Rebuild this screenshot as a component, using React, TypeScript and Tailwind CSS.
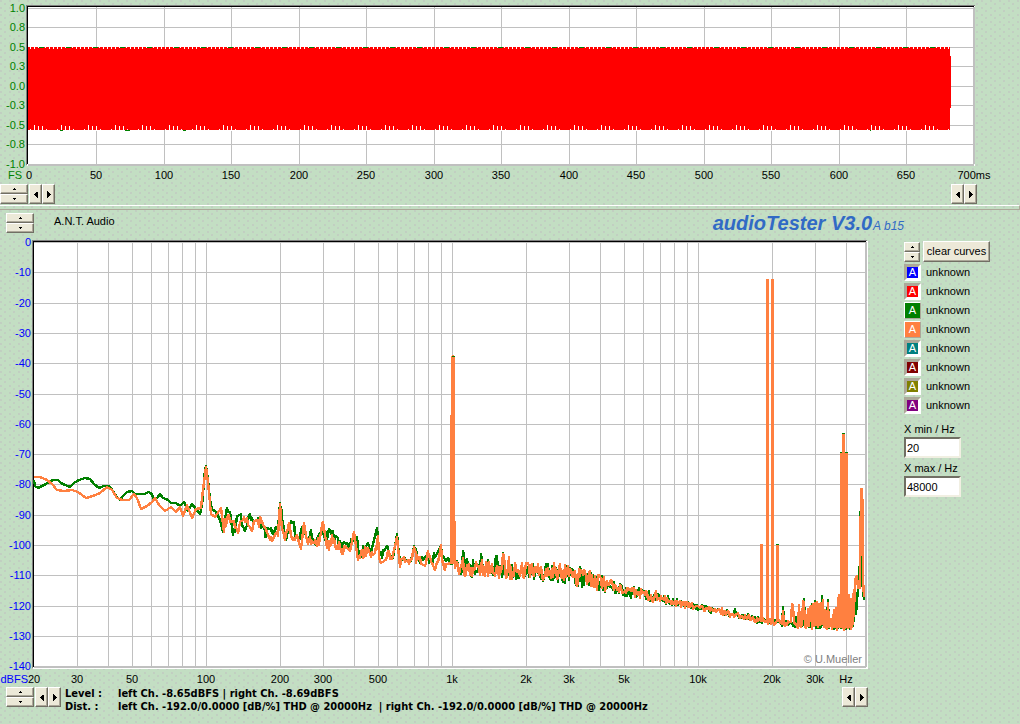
import React, { useState } from 'react';
import { clsx } from 'clsx';

type Point = [number, number];

const uiFont = "font-['Liberation_Sans',Arial,sans-serif]";

// ---------- small controls ----------

const raised =
  'flex items-center justify-center border border-t-white border-l-white border-r-[#716f64] border-b-[#716f64] bg-[#ece9d8] shadow-[inset_-1px_-1px_0_#aca899] active:bg-[#dedbca]';

const arrows = {
  up: 'M0 3h5v-1h-1v-1h-1v-1h-1v1h-1v1h-1z',
  down: 'M0 0h5v1h-1v1h-1v1h-1v-1h-1v-1h-1z',
  left: 'M3 0v7h-1v-1h-1v-1h-1v-1h-1v-1h1v-1h1v-1h1z',
  right: 'M0 0v7h1v-1h1v-1h1v-1h1v-1h-1v-1h-1v-1h-1z',
};

const Arrow = ({ dir }: { dir: keyof typeof arrows }) => {
  if (dir === 'up' || dir === 'down') {
    // small triangle, three pixels at its base
    return (
      <svg width="3" height="2" viewBox="0 0 3 2" shapeRendering="crispEdges">
        <path d={dir === 'up' ? 'M1 0h1v1h1v1H0V1h1z' : 'M0 0h3v1H2v1H1V1H0z'} />
      </svg>
    );
  }
  return (
    <svg width="4" height="7" viewBox={dir === 'left' ? '-1 0 4 7' : '0 0 4 7'} shapeRendering="crispEdges">
      <path d={arrows[dir]} />
    </svg>
  );
};

const Spinner = ({ label, narrow }: { label: string; narrow?: boolean }) => (
  <div className={clsx('flex shrink-0 flex-col', narrow ? 'w-4' : 'w-7')}>
    <button type="button" aria-label={`${label} up`} className={clsx(raised, 'h-[10px]')}>
      <Arrow dir="up" />
    </button>
    <button type="button" aria-label={`${label} down`} className={clsx(raised, 'h-[10px]')}>
      <Arrow dir="down" />
    </button>
  </div>
);

const Scroller = ({ label }: { label: string }) => (
  <div className="flex shrink-0">
    <button type="button" aria-label={`${label} left`} className={clsx(raised, 'h-5 w-[13px]')}>
      <Arrow dir="left" />
    </button>
    <button type="button" aria-label={`${label} right`} className={clsx(raised, 'h-5 w-[13px]')}>
      <Arrow dir="right" />
    </button>
  </div>
);

// ---------- time domain ----------

const levels = ['1.0', '0.8', '0.5', '0.3', '0.0', '-0.3', '-0.5', '-0.8', '-1.0'];
const times = Array.from({ length: 15 }, (_, i) => i * 50);
const periods = Array.from({ length: 35 }, (_, i) => 28 + i * 27);

const timeX = (ms: number) => Math.round(28.5 + ms * 1.35);
const levelY = (i: number) => Math.round(7.5 + i * 19.5);

const Waveform = () => (
  <svg viewBox="0 0 1020 184" className="block h-auto w-full" role="img" aria-label="Waveform" fontSize="11">
    <g shapeRendering="crispEdges">
      <rect x="26" y="5" width="949" height="1" fill="#808080" />
      <rect x="26" y="5" width="1" height="160" fill="#808080" />
      <rect x="27" y="6" width="948" height="160" fill="#fff" />
      {times.slice(1).map((t) => (
        <rect key={t} x={timeX(t) - (t === 700 ? 1 : 0)} y="7" width={t === 700 ? 2 : 1} height="157" fill="#c0c0c0" />
      ))}
      {levels.map((l, i) => (
        <rect key={l} x="28" y={levelY(i)} width="946" height={i === 8 ? 2 : 1} fill="#c0c0c0" />
      ))}
      <rect x="27" y="6" width="947" height="1" />
      <rect x="27" y="6" width="1" height="158" />
      <rect x="28" y="47" width="922" height="83" fill="#f00" />
      <rect x="950" y="56" width="1" height="52" fill="#f00" />
      {periods.map((p) => (
        <g key={p}>
          {[2, 6, 21, 25].map((d) => p + d < 950 && <rect key={d} x={p + d} y="47" width="1" height="2" fill="#fff" />)}
          {[10, 17].map((d) => p + d < 950 && <rect key={d} x={p + d} y="47" width="1" height="1" fill="#fff" />)}
          {[6, 10, 14].map(
            (d) => p + d < 950 && <rect key={d} x={p + d} y={d === 6 ? 125 : 126} width="1" height="5" fill="#fff" />,
          )}
          {[2, 18].map((d) => p + d < 950 && <rect key={d} x={p + d} y="129" width="1" height="1" fill="#fff" />)}
          {p < 920 && <rect x={p + 11} y="47" width="5" height="1" fill="#008000" />}
        </g>
      ))}
      {/* left channel showing below the right one */}
      <path d="M60 130h3v1h-3zM125 130h5v1h-5zM183 130h3v1h-3zM870 130h1v1h-1z" fill="#008000" />
    </g>
    <g fill="#008000" textAnchor="end">
      {levels.map((l, i) => (
        <text key={l} x="25" y={levelY(i) + 4}>
          {l}
        </text>
      ))}
      <text x="22" y="179">
        FS
      </text>
    </g>
    <g textAnchor="middle">
      {times.map((t) => (
        <text key={t} x={timeX(t)} y="179">
          {t === 700 ? '700ms' : t}
        </text>
      ))}
    </g>
  </svg>
);

// ---------- spectrum ----------

const freqX = (f: number) => Math.round(206 + 246 * Math.log10(f / 100));
const dbY = (db: number) => Math.round(242 - db * 3.03);

const gridFreqs = [10, 100, 1000, 10000]
  .flatMap((d) => [1, 2, 3, 4, 5, 6, 7, 8, 9].map((n) => n * d))
  .filter((f) => f > 20 && f < 48000);

const freqLabels: [number, string][] = [
  [20, '20'],
  [30, '30'],
  [50, '50'],
  [100, '100'],
  [200, '200'],
  [300, '300'],
  [500, '500'],
  [1000, '1k'],
  [2000, '2k'],
  [3000, '3k'],
  [5000, '5k'],
  [10000, '10k'],
  [20000, '20k'],
  [30000, '30k'],
  [40000, 'Hz'],
];

const leftStart =
  '34,480 35,486 38,488 42,486 46,484 50,481 54,480 58,480 61,483 65,485 70,487 74,483 79,480 85,478 90,479 94,484 99,488 104,486 109,486 113,491 117,497 120,500 123,496 127,492 132,491 135,494 140,494 145,494 148,492 151,493 154,499 157,498 160,494 163,498 168,500 171,503 176,503 180,506 184,502 188,511 192,504 196,509 200,514 202,505 203,494 205,470 206,466 208,480 210,500 212,509 216,512 220,520 223,532 226,513 230,512 233,535 236,525 241,514 245,531 249,515 252,518 257,521 260,525 263,526 265,537 270,529 274,534 278,530 280,503 282,518 286,540 290,524 294,522 299,540 303,526 307,540 311,530 316,545 322,530 325,540 328,534 331,531 334,540 338,538 342,550 345,543 350,550 355,535 358,548 362,557 367,544 371,552 377,528 379,550 382,558 387,546 393,558 397,534 399,555 404,557 411,561 414,546 418,560 422,557 428,554 433,562 441,546 446,561 451,564';

const rightStart =
  '34,477 40,477 47,480 52,484 57,490 64,491 72,490 78,492 86,498 93,496 100,493 107,487 112,490 117,498 122,500 129,500 134,494 137,498 141,509 147,506 152,502 155,498 159,505 165,511 171,507 176,512 180,507 183,516 187,505 192,518 196,509 201,508 203,490 206,467 208,482 211,514 215,517 221,508 224,532 228,515 234,521 238,533 243,520 247,518 252,531 258,520 263,524 270,540 276,533 278,536 280,504 282,530 285,540 289,523 293,540 297,535 301,549 304,523 307,541 310,537 313,543 317,546 320,536 323,522 326,541 329,550 332,535 336,549 339,542 342,554 345,546 350,551 354,532 358,560 361,552 364,556 367,548 371,557 375,553 378,536 379,556 384,561 388,551 392,559 397,537 400,567 403,558 408,560 412,559 414,547 416,563 420,557 425,566 428,551 431,562 435,570 438,562 441,545 442,562 445,570 451,563 452,357 454,357 454,500 455,568';

const random = (seed: number) => {
  let s = seed;
  return () => {
    s = (s * 16807) % 2147483647;
    return s / 2147483647;
  };
};

// bins get denser towards high frequencies, so add some in between
const roughen = (points: string, seed: number) => {
  const rnd = random(seed);
  const list = points.split(' ').map((p) => p.split(',').map(Number));
  return list
    .flatMap(([x, y], i) => {
      const next = list[i + 1];
      if (!next || x < 222 || next[0] - x < 2 || Math.abs(next[1] - y) > 18) return [[x, y]];
      const mid = (y + next[1]) / 2;
      return [
        [x, y],
        [x + 1, Math.round(mid + (rnd() - 0.5) * 10)],
        [x + 2, Math.round(mid + (rnd() - 0.5) * 10)],
      ];
    })
    .join(' ');
};

// x, y, noise height
const floor: [number, number, number][] = [
  [456, 570, 10],
  [500, 572, 11],
  [560, 575, 13],
  [590, 582, 13],
  [620, 591, 8],
  [650, 597, 7],
  [680, 604, 5],
  [720, 612, 4],
  [760, 621, 4],
  [800, 626, 4],
  [856, 628, 4],
];

const floorAt = (x: number) => {
  const i = Math.max(
    1,
    floor.findIndex((f) => f[0] >= x),
  );
  const [x0, y0, n0] = floor[i - 1];
  const [x1, y1, n1] = floor[i];
  const k = (x - x0) / (x1 - x0);
  return { y: y0 + (y1 - y0) * k, n: n0 + (n1 - n0) * k };
};

const noiseFloor = (seed: number, peaks: Point[]) => {
  const rnd = random(seed);
  const out: string[] = [];
  for (let x = 457; x < 852; x += 1) {
    const { y, n } = floorAt(x);
    const peak = peaks.find((p) => p[0] === x);
    out.push(`${x},${peak ? peak[1] : Math.round(y + (rnd() - 0.6) * n * 1.5)}`);
  }
  return out.join(' ');
};

const leftPeaks: Point[] = [
  [463, 551], [464, 556], [467, 559], [473, 560], [481, 554], [482, 560], [488, 560], [496, 556], [497, 556],
  [503, 553], [522, 565], [546, 564], [547, 567], [559, 566], [566, 568], [580, 567], [581, 570], [593, 575],
  [688, 602], [702, 605], [735, 609], [748, 614], [783, 607], [796, 617], [804, 599], [812, 604], [815, 601],
  [822, 596], [828, 600],
];

const rightPeaks: Point[] = [
  [463, 558], [482, 560], [489, 562], [503, 554], [504, 556], [509, 557], [515, 563], [526, 563], [527, 564],
  [532, 564], [541, 567], [546, 569], [554, 563], [570, 569], [571, 570], [583, 575], [592, 575], [598, 575],
  [599, 575], [611, 580], [620, 585], [656, 591], [709, 607], [722, 608], [783, 611], [792, 604], [793, 606],
  [799, 605], [803, 601], [804, 602], [808, 609], [810, 608], [811, 606], [813, 604], [815, 603], [817, 602],
  [819, 604], [821, 603], [823, 600], [825, 610], [828, 603], [831, 619], [834, 610], [836, 608], [838, 598],
  [840, 600],
];

const leftEnd = '852,620 853,626 855,598 856,614 858,588 860,562 861,490 862,580 864,600';
const rightEnd = '852,626 854,612 855,580 857,576 858,588 860,588 861,489 862,489 863,522 863,580 864,597';

const leftCurve = `${roughen(leftStart, 19)} ${noiseFloor(71, leftPeaks)} ${leftEnd}`;
const rightCurve = `${roughen(rightStart, 523)} ${noiseFloor(4207, rightPeaks)} ${rightEnd}`;

// x, top, bottom, width
const tones: [number, number, number, number][] = [
  [452, 358, 564, 3],
  [760, 544, 622, 3],
  [766, 279, 622, 3],
  [771, 279, 622, 3],
  [776, 545, 622, 3],
  [840, 453, 628, 8],
  [842, 434, 628, 3],
];

const Spectrum = () => (
  <svg viewBox="0 236 868 450" className="block h-auto w-full" role="img" aria-label="Spectrum" fontSize="11">
    <g shapeRendering="crispEdges">
      <rect x="32" y="240" width="835" height="428" fill="#808080" />
      <rect x="33" y="241" width="835" height="428" fill="#fff" />
      {gridFreqs.map((f) => (
        <rect key={f} x={freqX(f)} y="242" width="1" height="425" fill="#c0c0c0" />
      ))}
      {Array.from({ length: 15 }, (_, i) => (
        <rect key={i} x="34" y={dbY(-10 * i)} width="832" height={i === 14 ? 2 : 1} fill="#c0c0c0" />
      ))}
      <rect x="865" y="242" width="2" height="425" fill="#c0c0c0" />
      <rect x="33" y="241" width="833" height="1" />
      <rect x="33" y="241" width="1" height="426" />
      <g fill="none" strokeWidth="2.4" strokeLinejoin="round">
        <polyline points={leftCurve} stroke="#008000" />
        <polyline points={rightCurve} stroke="#ff8040" />
      </g>
      {tones.map(([x, top, bottom, w]) => (
        <rect key={x} x={x} y={top} width={w} height={bottom - top} fill="#ff8040" />
      ))}
      <path d="M452 356h3v1h-3zM776 544h3v1h-3zM840 452h2v1h-2zM845 452h3v1h-3zM842 433h3v1h-3z" fill="#008000" />
      <path d="M838 628V594h2v34zM848 628V594h2v4h2v-5h2v32z" fill="#ff8040" />
    </g>
    <g fill="#00f" textAnchor="end">
      {Array.from({ length: 15 }, (_, i) => (
        <text key={i} x="31" y={dbY(-10 * i) + 4}>
          {-10 * i || 0}
        </text>
      ))}
      <text x="28" y="683">
        dBFS
      </text>
    </g>
    <g textAnchor="middle">
      {freqLabels.map(([f, label]) => (
        <text key={f} x={freqX(f)} y="683">
          {label}
        </text>
      ))}
    </g>
    <text x="862" y="663" textAnchor="end" fill="#808080">
      © U.Mueller
    </text>
  </svg>
);

// ---------- side panel ----------

const curves = [
  { color: 'bg-[#0000ff]', on: false },
  { color: 'bg-[#ff0000]', on: false },
  { color: 'bg-[#008000]', on: true },
  { color: 'bg-[#ff8040]', on: true },
  { color: 'bg-[#008080]', on: false },
  { color: 'bg-[#800000]', on: false },
  { color: 'bg-[#808000]', on: false },
  { color: 'bg-[#800080]', on: false },
];

const inputStyle =
  'mt-px h-[21px] w-[57px] border-2 border-t-[#716f64] border-l-[#716f64] border-r-[#f1efe2] border-b-[#f1efe2] bg-white px-px text-[11px] leading-4 outline-none';

const SidePanel = () => {
  const [min, setMin] = useState('20');
  const [max, setMax] = useState('48000');
  return (
    <aside className="w-[152px] shrink-0 pt-[5px] pl-9">
      <div className="flex items-center gap-[3px]">
        <Spinner label="Curve" narrow />
        <button type="button" className={clsx(raised, 'h-[21px] w-[67px] whitespace-nowrap')}>
          clear curves
        </button>
      </div>
      <ul className="mt-px">
        {curves.map((c) => (
          <li key={c.color} className="flex h-[19px] items-center gap-[5px]">
            <button
              type="button"
              aria-label="Toggle curve"
              aria-pressed={c.on}
              className={clsx(
                'flex h-[17px] w-[17px] items-center justify-center text-[11px] leading-none text-white',
                c.color,
                c.on
                  ? 'border border-t-white border-l-white border-r-[#aca899] border-b-[#aca899]'
                  : 'border-[3px] border-t-[#aca899] border-l-[#aca899] border-r-white border-b-white',
              )}
            >
              A
            </button>
            <span>unknown</span>
          </li>
        ))}
      </ul>
      <div className="mt-2 flex flex-col">
        <label htmlFor="xmin">X min / Hz</label>
        <input id="xmin" value={min} onChange={(e) => setMin(e.target.value)} className={inputStyle} />
        <label htmlFor="xmax" className="mt-1">
          X max / Hz
        </label>
        <input id="xmax" value={max} onChange={(e) => setMax(e.target.value)} className={inputStyle} />
      </div>
    </aside>
  );
};

const App = () => {
  return (
    <div
      className={clsx(
        uiFont,
        'min-h-screen bg-[#c3dec3] bg-[radial-gradient(circle_at_1px_1px,#c0c4c0_0.5px,transparent_1px),radial-gradient(circle_at_5px_4px,#c0c4c0_0.5px,transparent_1px)] bg-[size:9px_7px] text-[11px] leading-[13px] text-black',
      )}
    >
      <section>
        <Waveform />
        <div className="flex items-center justify-between pr-[43px]">
          <div className="flex gap-px">
            <Spinner label="Level range" />
            <Scroller label="Time" />
          </div>
          <Scroller label="Time range" />
        </div>
      </section>

      <div className="mt-px h-[5px] border-t border-r border-b border-t-white border-r-[#aca899] border-b-[#aca899]" />

      <section>
        <header className="flex h-[26px] items-center pl-1.5">
          <Spinner label="Spectrum" />
          <span className="ml-5 self-start leading-[22px]">A.N.T. Audio</span>
          <div className="mr-[116px] ml-auto flex items-baseline gap-px text-[#316ac5] italic">
            <h1 className="text-[20px] leading-6 font-bold">audioTester V3.0</h1>
            <span className="text-xs">A b15</span>
          </div>
        </header>
        <div className="flex items-start">
          <div className="min-w-0 flex-1">
            <Spectrum />
            <div className="flex items-start pt-px pl-1.5">
              <Spinner label="dB range" />
              <div className="ml-px">
                <Scroller label="Frequency" />
              </div>
              <dl className="ml-1 grid grid-cols-[53px_auto] font-['DejaVu_Sans_Condensed','Open_Sans',sans-serif] font-bold whitespace-pre">
                <dt>Level :</dt>
                <dd>left Ch. -8.65dBFS | right Ch. -8.69dBFS</dd>
                <dt>Dist. :</dt>
                <dd>left Ch. -192.0/0.0000 [dB/%] THD @ 20000Hz  | right Ch. -192.0/0.0000 [dB/%] THD @ 20000Hz</dd>
              </dl>
              <div className="ml-auto">
                <Scroller label="Frequency range" />
              </div>
            </div>
          </div>
          <SidePanel />
        </div>
      </section>
    </div>
  );
};

export default App;
